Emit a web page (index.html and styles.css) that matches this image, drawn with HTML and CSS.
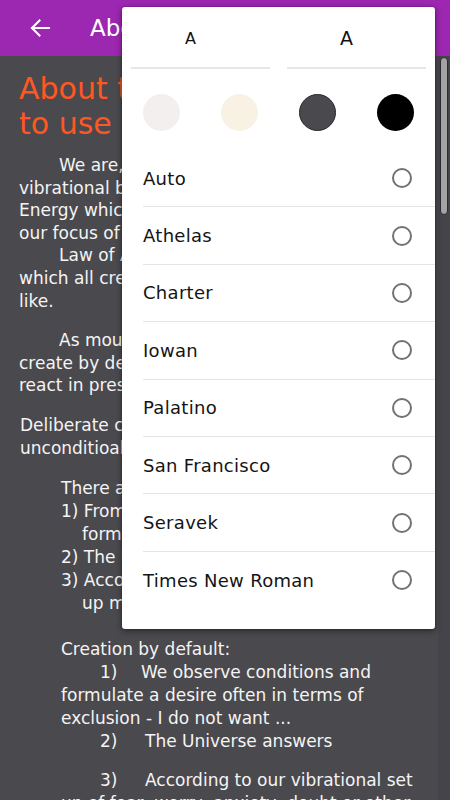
FILE: index.html
```html
<!DOCTYPE html>
<html lang="en">
<head>
<meta charset="utf-8">
<title>About</title>
<link rel="stylesheet" href="styles.css">
</head>
<body>
<div class="screen">
  <header class="appbar">
    <svg class="back" viewBox="0 0 24 24" width="24" height="24" aria-hidden="true">
      <path d="M21 12H4M11.5 4.5L4 12l7.5 7.5" fill="none" stroke="#fff" stroke-width="2.1" stroke-linecap="square"/>
    </svg>
    <span class="appbar-title">About</span>
  </header>

  <main class="content">
    <h1 class="title">About this app and<br>to use it</h1>
    <p class="para"><span class="tab"></span>We are, first and foremost,<br>vibrational beings, extensions<br>Energy which flows to us<br>our focus of attention.<br><span class="tab"></span>Law of Attraction is the law<br>which all creation rests upon<br>like.</p>
    <p class="para"><span class="tab"></span>As mouthpieces of Source we<br>create by deliberate intention<br>react in presence of conditions.</p>
    <p class="para shift">Deliberate creation is based on<br>unconditioal love and joy.</p>
    <div class="block">
      <p class="line">There are three steps:</p>
      <p class="item">1) From contrast we<br>formulate a desire</p>
      <p class="item">2) The Universe answers</p>
      <p class="item">3) According to our set<br>up manifestation follows</p>
    </div>
    <div class="block block-b">
      <p class="line">Creation by default:</p>
      <p class="line"><span class="num">1)</span>We observe conditions and</p>
      <p class="line">formulate a desire often in terms of</p>
      <p class="line">exclusion - I do not want ...</p>
      <p class="line"><span class="num num-w">2)</span>The Universe answers</p>
      <p class="line gap"><span class="num num-w">3)</span>According to our vibrational set</p>
      <p class="line">up of fear, worry, anxiety, doubt or other</p>
    </div>
  </main>

  <div class="scrollbar"><div class="thumb"></div></div>

  <div class="menu">
    <div class="sizes">
      <button class="size size-s">A</button>
      <button class="size size-l">A</button>
    </div>
    <div class="themes">
      <span class="swatch sw-light"></span>
      <span class="swatch sw-sepia"></span>
      <span class="swatch sw-dark"></span>
      <span class="swatch sw-black"></span>
    </div>
    <ul class="fonts">
      <li class="font-row"><span>Auto</span><span class="radio"></span></li>
      <li class="font-row"><span>Athelas</span><span class="radio"></span></li>
      <li class="font-row"><span>Charter</span><span class="radio"></span></li>
      <li class="font-row"><span>Iowan</span><span class="radio"></span></li>
      <li class="font-row"><span>Palatino</span><span class="radio"></span></li>
      <li class="font-row"><span>San Francisco</span><span class="radio"></span></li>
      <li class="font-row"><span>Seravek</span><span class="radio"></span></li>
      <li class="font-row"><span>Times New Roman</span><span class="radio"></span></li>
    </ul>
  </div>
</div>
</body>
</html>
```

FILE: styles.css
```css
* { box-sizing: border-box; }
html, body { margin: 0; padding: 0; }
body {
  width: 450px;
  height: 800px;
  overflow: hidden;
  background: #4a494e;
  font-family: "DejaVu Sans", "Noto Sans", sans-serif;
}
.screen {
  position: relative;
  width: 450px;
  height: 800px;
  overflow: hidden;
  background: #4a494e;
}
.appbar {
  height: 56px;
  background: #9c27b0;
  display: flex;
  align-items: center;
  padding-left: 28px;
}
.back { width: 24px; height: 24px; display: block; }
.appbar-title {
  color: #fff;
  font-size: 23px;
  margin-left: 38px;
}
.content {
  padding: 15px 20px 0 19px;
  color: #f4f4f4;
  font-size: 17px;
  line-height: 22.6px;
}
.title {
  margin: 0 0 13px;
  color: #ff5722;
  font-weight: normal;
  font-size: 30px;
  line-height: 35px;
  white-space: nowrap;
}
.para { margin: 0 0 17px; white-space: nowrap; }
.shift { padding-left: 1px; margin-bottom: 18px; }
.tab { display: inline-block; width: 40px; }
.block { margin-left: 42px; }
.block p { margin: 0; white-space: nowrap; }
.block .line, .block .item { line-height: 23px; }
.item { padding-left: 21px; text-indent: -21px; }
.block-b { margin-top: 23px; }
.num { display: inline-block; margin-left: 39px; width: 41px; }
.num-w { width: 45px; }
.gap { margin-top: 16px !important; }

.scrollbar {
  position: absolute;
  left: 438px;
  top: 56px;
  width: 12px;
  height: 744px;
  background: #45444a;
}
.thumb {
  margin: 1px 0 0 2px;
  width: 8px;
  height: 158px;
  border-radius: 4px;
  background: #a3a3a5;
  border: 1px solid #2c2c30;
}

.menu {
  position: absolute;
  left: 122px;
  top: 7px;
  width: 313px;
  height: 622px;
  background: #fff;
  border-radius: 3px;
  box-shadow: 0 2px 6px rgba(0,0,0,.45), 0 0 2px rgba(0,0,0,.3);
  padding-bottom: 21px;
  font-family: "DejaVu Sans", "Noto Sans", sans-serif;
}
.sizes {
  display: flex;
  gap: 17px;
  padding: 0 9px;
}
.size {
  flex: 1;
  height: 62px;
  border: 0;
  border-bottom: 2px solid #e7e7e7;
  background: #fff;
  color: #111;
  font-family: inherit;
  padding: 2px 20px 0 0;
  display: flex;
  align-items: center;
  justify-content: center;
}
.size-s { font-size: 16px; }
.size-l { font-size: 19px; }
.themes {
  display: flex;
  justify-content: space-around;
  padding: 25px 0 19px;
}
.swatch {
  width: 37px;
  height: 37px;
  border-radius: 50%;
  display: block;
}
.sw-light { background: #f3efef; }
.sw-sepia { background: #f9f1e4; }
.sw-dark { background: #4a494e; border: 1px solid #2a2a2e; }
.sw-black { background: #000; }
.fonts {
  list-style: none;
  margin: 0;
  padding: 0 0 0 21px;
}
.font-row {
  height: 57.4px;
  display: flex;
  align-items: center;
  justify-content: space-between;
  padding-right: 23px;
  border-bottom: 1px solid #e4e4e4;
  color: #141414;
  font-size: 18px;
  letter-spacing: 0.3px;
}
.font-row:last-child { border-bottom: 0; }
.radio {
  width: 20px;
  height: 20px;
  border-radius: 50%;
  border: 2px solid #727272;
  display: block;
}
```
